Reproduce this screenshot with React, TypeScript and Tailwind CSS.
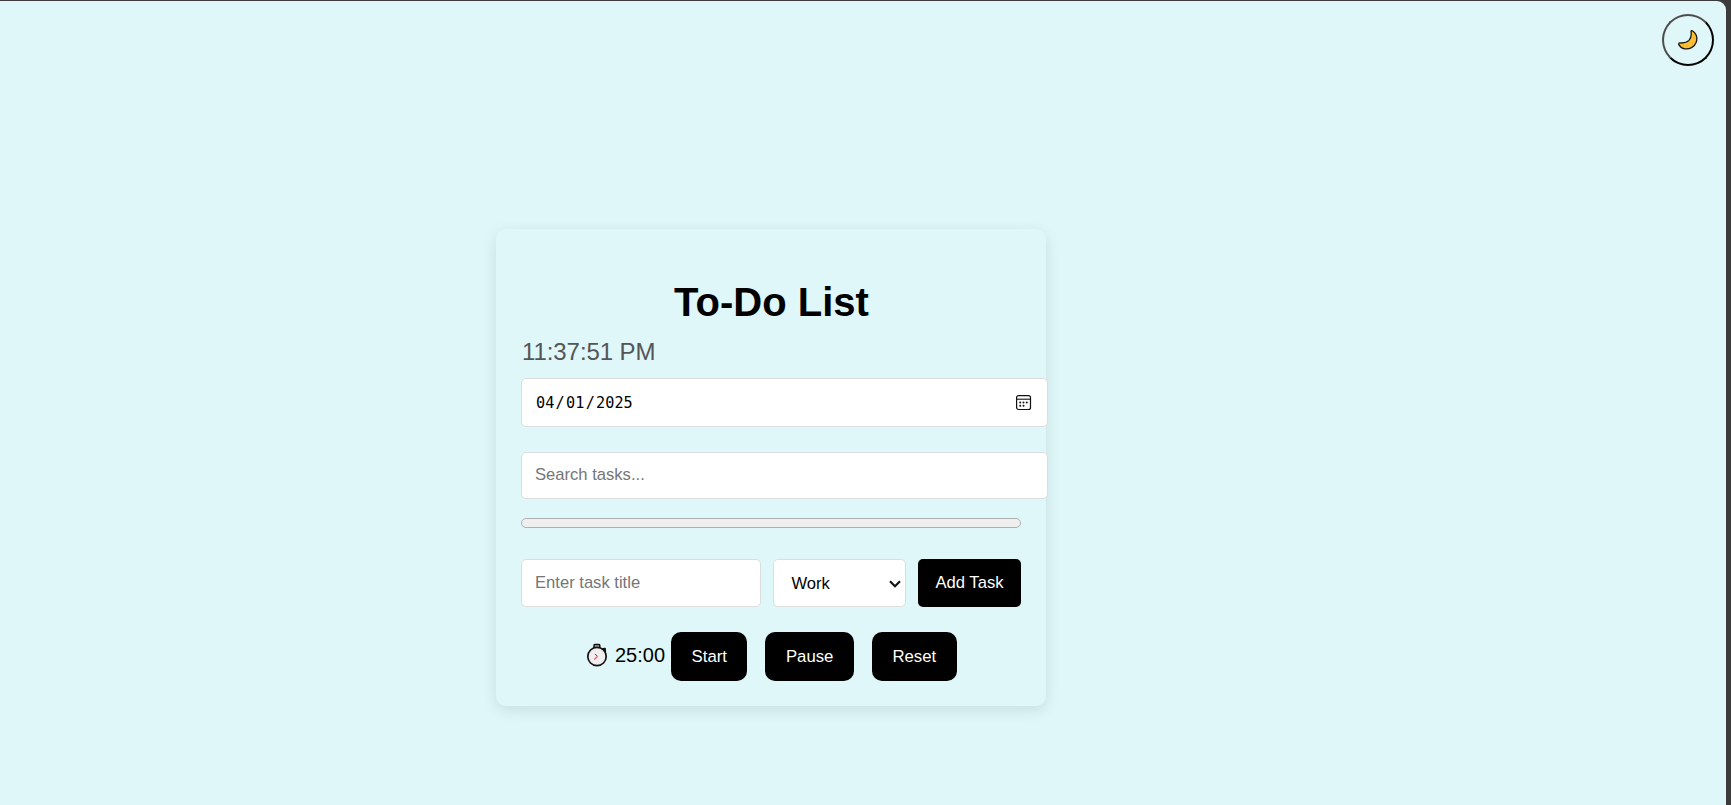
import React from 'react';

function MoonIcon() {
  return (
    <svg width="20" height="20" viewBox="0 0 20 20" fill="none">
      <path
        d="M13 1.6 C13 0.7 14 0.4 14.7 1 C18.2 3.6 19.6 8 18.2 12.2 C16.4 17.2 11.4 19.6 6.8 18.8 C4 18.2 1.8 16.6 0.8 14.6 C0.4 13.5 1 12.8 2 12.9 C5.4 13.2 8.8 12.6 11 10.4 C13.2 8 13.6 5 13 1.6Z"
        fill="#fcc035"
        stroke="#1a1712"
        strokeWidth="1.3"
        strokeLinejoin="round"
      />
      <path d="M16.4 7.6v1M14 13.2l.8-.6M8.6 15.8h1.2M5 15.2h.8" stroke="#ef9a2d" strokeWidth="1.1" />
    </svg>
  );
}

function StopwatchIcon() {
  return (
    <svg className="-mt-[3px]" width="22" height="24" viewBox="0 0 22 24" fill="none">
      <rect x="8" y="1.6" width="5.8" height="4" rx="0.8" fill="#aaa" stroke="#111" strokeWidth="1.5" />
      <path d="M16.6 5.8l2.4-.2.2 2.8z" fill="#333" stroke="#111" strokeWidth="1.8" strokeLinejoin="round" />
      <circle cx="11" cy="13.5" r="9.2" fill="#f1eff0" stroke="#111" strokeWidth="1.7" />
      <circle cx="11" cy="13.5" r="7" stroke="#d8d5d6" strokeWidth="0.9" strokeDasharray="1 2.66" />
      <path d="M9 10.9l2.5 2.5" stroke="#444" strokeWidth="1" />
      <path d="M11.5 13.5l-3.4 3" stroke="#f0606a" strokeWidth="1.3" />
    </svg>
  );
}

function CalendarIcon() {
  return (
    <svg width="16" height="16" viewBox="0 0 16 16" fill="none">
      <rect x="0.6" y="0.6" width="13.9" height="13.9" rx="2" stroke="#111" strokeWidth="1.2" />
      <path d="M0.6 4.2h13.9" stroke="#111" strokeWidth="1.1" />
      <g fill="#111">
        <circle cx="4.2" cy="7.6" r="1" />
        <circle cx="7.5" cy="7.6" r="1" />
        <circle cx="10.8" cy="7.6" r="1" />
        <circle cx="4.2" cy="10.8" r="1" />
        <circle cx="7.5" cy="10.8" r="1" />
      </g>
    </svg>
  );
}

function TimerButton({ children }: { children: React.ReactNode }) {
  return (
    <button className="h-[49px] rounded-[10px] bg-black px-[20.5px] text-[16.75px] text-white">
      {children}
    </button>
  );
}

export default function App() {
  return (
    <div className="h-[805px] w-[1731px] overflow-hidden bg-[#3b3b3b] pt-px pr-[5px] font-['Liberation_Sans',Arial,sans-serif] text-black">
      <div className="relative h-full rounded-tr-[9px] bg-[#dff7f9] pt-[228px] pl-[496px]">
        <button
          aria-label="Toggle dark mode"
          className="absolute top-[13px] right-[12px] flex h-[52px] w-[52px] items-center justify-center rounded-full border-2 border-t-[#4c4c4c] border-r-black border-b-black border-l-[#4c4c4c]"
        >
          <MoonIcon />
        </button>

        <main className="flex h-[477px] w-[550px] flex-col rounded-[10px] px-[25px] pt-[50px] shadow-[0_4px_15px_rgba(0,0,0,0.1)]">
          <h1 className="pl-px text-center text-[40px] leading-[46px] font-bold">To-Do List</h1>
          <p className="mt-[13px] pl-px text-[24px] leading-[28px] tracking-[-0.08px] text-[#555]">11:37:51 PM</p>

          <div className="mt-[12px] flex h-[49px] w-[527px] shrink-0 items-center justify-between rounded-[5px] border border-[#ddd] bg-white pr-[15px] pl-[14px]">
            <div className="flex gap-[1.3px] pt-[2px] font-['DejaVu_Sans_Mono',monospace] text-[15.2px]">
              <span>04</span>
              <span>/</span>
              <span>01</span>
              <span>/</span>
              <span>2025</span>
            </div>
            <CalendarIcon />
          </div>

          <input
            placeholder="Search tasks..."
            className="mt-[25px] h-[47px] w-[527px] shrink-0 rounded-[5px] border border-[#ddd] bg-white px-[13px] pb-[1px] text-[16.6px] placeholder:text-[#757575]"
          />

          <div className="mt-[19px] h-[10px] w-full shrink-0 rounded-[5px] border border-[#b0b0b0] bg-[#efefef]" />

          <div className="mt-[31px] flex h-[48px] shrink-0 gap-[12px]">
            <input
              placeholder="Enter task title"
              className="w-[240px] rounded-[5px] border border-[#ddd] bg-white px-[13px] text-[16.6px] placeholder:text-[#757575]"
            />
            <div className="flex w-[133px] items-center justify-between rounded-[5px] border border-[#ddd] bg-white pt-[2px] pr-[4px] pl-[17.5px] text-[16.6px]">
              <span>Work</span>
              <svg width="12" height="8" viewBox="0 0 12 8" fill="none">
                <path d="M1 1.2l5 5 5-5" stroke="#111" strokeWidth="2.1" />
              </svg>
            </div>
            <button className="flex-1 rounded-[5px] bg-black text-[16.6px] whitespace-nowrap text-white">
              Add Task
            </button>
          </div>

          <div className="mt-[25px] flex shrink-0 items-center pl-[65px]">
            <StopwatchIcon />
            <span className="mr-[6px] ml-[7px] pb-[3px] text-[20px]">25:00</span>
            <div className="flex gap-[18px]">
              <TimerButton>Start</TimerButton>
              <TimerButton>Pause</TimerButton>
              <TimerButton>Reset</TimerButton>
            </div>
          </div>
        </main>
      </div>
    </div>
  );
}
